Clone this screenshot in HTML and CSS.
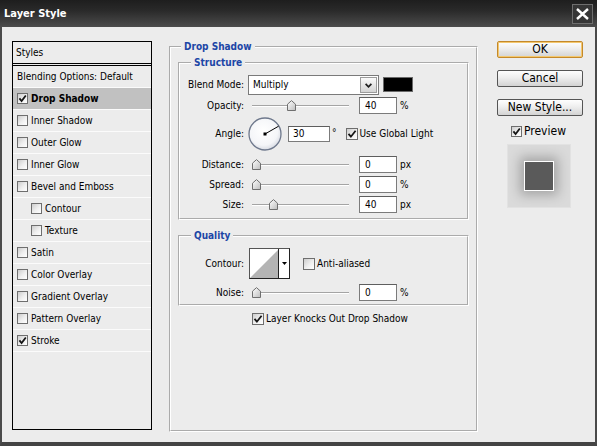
FILE: index.html
```html
<!DOCTYPE html>
<html>
<head>
<meta charset="utf-8">
<title>Layer Style</title>
<link rel="stylesheet" href="styles.css">
</head>
<body>
<div class="window">
  <div class="titlebar">
    <span class="title">Layer Style</span>
    <div class="close">
      <svg width="13" height="12" viewBox="0 0 13 12"><path d="M1 1L12 11M12 1L1 11"/></svg>
    </div>
  </div>
  <div class="body">
    <div class="list">
      <div class="list-head">Styles</div>
      <div class="item">Blending Options: Default</div>
      <div class="item sel"><span class="cb"><svg viewBox="0 0 9 9"><path d="M1.4 4.4L3.6 7L7.8 1.5"/></svg></span><b>Drop Shadow</b></div>
      <div class="item"><span class="cb"></span>Inner Shadow</div>
      <div class="item"><span class="cb"></span>Outer Glow</div>
      <div class="item"><span class="cb"></span>Inner Glow</div>
      <div class="item"><span class="cb"></span>Bevel and Emboss</div>
      <div class="item sub-item"><span class="cb"></span>Contour</div>
      <div class="item sub-item"><span class="cb"></span>Texture</div>
      <div class="item"><span class="cb"></span>Satin</div>
      <div class="item"><span class="cb"></span>Color Overlay</div>
      <div class="item"><span class="cb"></span>Gradient Overlay</div>
      <div class="item"><span class="cb"></span>Pattern Overlay</div>
      <div class="item"><span class="cb"><svg viewBox="0 0 9 9"><path d="M1.4 4.4L3.6 7L7.8 1.5"/></svg></span>Stroke</div>
    </div>

    <div class="main">
      <fieldset class="grp outer">
        <legend>Drop Shadow</legend>
        <fieldset class="grp sub structure">
          <legend>Structure</legend>
          <div class="row r-blend">
            <span class="lbl">Blend Mode:</span>
            <div class="select">
              <span class="sel-text">Multiply</span>
              <span class="sel-btn"><svg width="7" height="5" viewBox="0 0 7 5"><path d="M0.6 0.8L3.5 3.8L6.4 0.8"/></svg></span>
            </div>
            <span class="swatch"></span>
          </div>
          <div class="row r-slider first">
            <span class="lbl">Opacity:</span>
            <div class="slider"><span class="thumb" style="left:35px"><svg width="9" height="11" viewBox="0 0 9 11"><defs><linearGradient id="tg" x1="0" y1="0" x2="1" y2="1"><stop offset="0" stop-color="#ffffff"/><stop offset="1" stop-color="#bdbdbd"/></linearGradient></defs><path class="tp" d="M0.5 4.2L4.5 0.6L8.5 4.2V10.5H0.5Z"/></svg></span></div>
            <span class="num">40</span><span class="unit">%</span>
          </div>
          <div class="row r-angle">
            <span class="lbl">Angle:</span>
            <svg class="dial" width="34" height="34" viewBox="0 0 34 34">
              <defs><radialGradient id="dg" cx="0.45" cy="0.4" r="0.6"><stop offset="0" stop-color="#ffffff"/><stop offset="0.75" stop-color="#f4f5f8"/><stop offset="1" stop-color="#d9dce4"/></radialGradient></defs>
              <circle cx="17" cy="17" r="16" fill="url(#dg)" stroke="#6e788c" stroke-width="1.3"/>
              <line x1="17" y1="17" x2="30.6" y2="9.2" stroke="#000" stroke-width="1"/>
              <rect x="15.5" y="15.5" width="3" height="3" fill="#000"/>
            </svg>
            <span class="num ang">30</span><span class="deg">°</span>
            <span class="chk glob"><span class="cb lg"><svg viewBox="0 0 10 10"><path d="M1.5 4.9L3.9 7.7L8.6 1.8"/></svg></span>Use Global Light</span>
          </div>
          <div class="row r-slider dist">
            <span class="lbl">Distance:</span>
            <div class="slider"><span class="thumb" style="left:0px"><svg width="9" height="11" viewBox="0 0 9 11"><path class="tp" d="M0.5 4.2L4.5 0.6L8.5 4.2V10.5H0.5Z"/></svg></span></div>
            <span class="num">0</span><span class="unit">px</span>
          </div>
          <div class="row r-slider">
            <span class="lbl">Spread:</span>
            <div class="slider"><span class="thumb" style="left:0px"><svg width="9" height="11" viewBox="0 0 9 11"><path class="tp" d="M0.5 4.2L4.5 0.6L8.5 4.2V10.5H0.5Z"/></svg></span></div>
            <span class="num">0</span><span class="unit">%</span>
          </div>
          <div class="row r-slider">
            <span class="lbl">Size:</span>
            <div class="slider"><span class="thumb" style="left:17px"><svg width="9" height="11" viewBox="0 0 9 11"><path class="tp" d="M0.5 4.2L4.5 0.6L8.5 4.2V10.5H0.5Z"/></svg></span></div>
            <span class="num">40</span><span class="unit">px</span>
          </div>
        </fieldset>

        <fieldset class="grp sub quality">
          <legend>Quality</legend>
          <div class="row r-contour">
            <span class="lbl">Contour:</span>
            <div class="contour">
              <span class="c-curve"><svg width="28" height="28" viewBox="0 0 28 28"><polygon points="0,28 28,0 28,28" fill="#b4b4b4"/></svg></span>
              <span class="c-btn"><svg width="5" height="3" viewBox="0 0 5 3"><polygon points="0,0 5,0 2.5,3" fill="#000"/></svg></span>
            </div>
            <span class="chk aa"><span class="cb lg"></span>Anti-aliased</span>
          </div>
          <div class="row r-slider noise">
            <span class="lbl">Noise:</span>
            <div class="slider"><span class="thumb" style="left:0px"><svg width="9" height="11" viewBox="0 0 9 11"><path class="tp" d="M0.5 4.2L4.5 0.6L8.5 4.2V10.5H0.5Z"/></svg></span></div>
            <span class="num">0</span><span class="unit">%</span>
          </div>
        </fieldset>

        <span class="chk knock"><span class="cb lg"><svg viewBox="0 0 10 10"><path d="M1.5 4.9L3.9 7.7L8.6 1.8"/></svg></span>Layer Knocks Out Drop Shadow</span>
      </fieldset>
    </div>

    <div class="side">
      <div class="btn ok">OK</div>
      <div class="btn">Cancel</div>
      <div class="btn">New Style...</div>
      <span class="chk preview"><span class="cb"><svg viewBox="0 0 9 9"><path d="M1.4 4.4L3.6 7L7.8 1.5"/></svg></span>Preview</span>
      <div class="pbox"><div class="sq"></div></div>
    </div>
  </div>
</div>
</body>
</html>
```

FILE: styles.css
```css
* { box-sizing: border-box; }
html, body { margin: 0; padding: 0; }
body {
  width: 597px;
  height: 446px;
  overflow: hidden;
  background: #ececec;
  font-family: "DejaVu Sans Condensed", "DejaVu Sans", sans-serif;
  font-stretch: condensed;
  font-size: 10px;
  line-height: 12px;
  color: #000;
}
.window {
  width: 597px;
  height: 446px;
  display: flex;
  flex-direction: column;
}
.titlebar {
  height: 27px;
  flex: none;
  display: flex;
  align-items: center;
  justify-content: space-between;
  padding: 0 4px;
  background: linear-gradient(#1e1e1e, #2a2a2a 40%, #4c4c4c);
}
.title {
  color: #fff;
  font-weight: bold;
  font-size: 11px;
}
.close {
  width: 21px;
  height: 20px;
  border: 1px solid #6e6e6e;
  background: #363636;
  display: flex;
  align-items: center;
  justify-content: center;
}
.close path { stroke: #fff; stroke-width: 2.4; fill: none; }

.body {
  flex: 1;
  display: flex;
  align-items: flex-start;
  padding: 14px 0 0 10px;
  border-left: 2px solid #4a4a4a;
  border-right: 2px solid #4a4a4a;
  border-bottom: 4px solid #444;
  background: #ececec;
}

/* left style list */
.list {
  width: 140px;
  height: 389px;
  flex: none;
  border: 1px solid #000;
}
.list-head {
  height: 24px;
  border-bottom: 3px double #000;
  display: flex;
  align-items: center;
  padding-left: 3px;
}
.item {
  height: 22px;
  border-bottom: 1px solid #fbfbfb;
  display: flex;
  align-items: center;
  gap: 3px;
  padding-left: 4px;
}
.item.sub-item { padding-left: 18px; }
.item.sel { background: #c1c1c1; }

.cb {
  width: 11px;
  height: 11px;
  flex: none;
  border: 1px solid #6e6e6e;
  background: linear-gradient(135deg, #cdcdcd 0%, #efefef 55%, #ffffff 100%);
  display: flex;
}
.cb svg { width: 9px; height: 9px; }
.cb path { fill: none; stroke: #151515; stroke-width: 1.8; }
.cb.lg { width: 12px; height: 12px; }
.cb.lg svg { width: 10px; height: 10px; }

/* main panel */
.main {
  width: 309px;
  margin-left: 17px;
  flex: none;
}
fieldset.grp {
  margin: 0;
  min-width: 0;
  border: 2px groove #fff;
}
fieldset.grp > legend {
  font-weight: bold;
  color: #1c46a6;
  line-height: 12px;
  padding: 0 3px;
}
fieldset.outer {
  height: 391px;
  padding: 4px 7px 0;
}
fieldset.outer > legend { margin-left: 3px; }
fieldset.sub { padding: 6px 0 5px; }
fieldset.sub > legend { margin-left: 11px; }
fieldset.quality { margin-top: 10px; padding: 6px 0 3px; }

.row { display: flex; align-items: center; }
.lbl { width: 64px; flex: none; text-align: right; }

.r-blend { height: 20px; }
.select {
  width: 131px;
  height: 20px;
  margin-left: 4px;
  flex: none;
  border: 1px solid #7a7a7a;
  background: #fff;
  display: flex;
  align-items: center;
  justify-content: space-between;
  padding: 1px 1px 1px 4px;
}
.sel-btn {
  width: 17px;
  height: 16px;
  border: 1px solid #9c9c9c;
  background: linear-gradient(#fbfbfb, #e6e6e6 50%, #d4d4d4);
  display: flex;
  align-items: center;
  justify-content: center;
}
.sel-btn path { fill: none; stroke: #1e1e1e; stroke-width: 1.7; }
.swatch {
  width: 30px;
  height: 15px;
  margin-left: 4px;
  align-self: flex-start;
  margin-top: 2px;
  background: #000;
  border: 1px solid #6a6a6a;
}

.r-slider { height: 17px; margin-top: 3px; }
.r-slider.first { margin-top: 2px; }
.r-slider.dist { margin-top: 5px; }
.slider {
  width: 97px;
  height: 11px;
  margin-left: 8px;
  flex: none;
  position: relative;
}
.slider::before {
  content: "";
  position: absolute;
  left: 0;
  right: 0;
  top: 5px;
  height: 1px;
  background: #a4a4a4;
  box-shadow: 0 1px 0 #fff;
}
.thumb {
  position: absolute;
  top: 0;
  width: 9px;
  height: 11px;
  display: block;
}
.thumb svg { display: block; }
.tp { fill: url(#tg); stroke: #6f6f6f; stroke-width: 1; }

.num {
  width: 38px;
  height: 17px;
  margin-left: 10px;
  flex: none;
  border: 1px solid #7b7b7b;
  border-top-color: #5e5e5e;
  background: #fff;
  padding-left: 5px;
  line-height: 15px;
}
.unit { margin-left: 3px; }

.r-angle { height: 34px; margin-top: 3px; }
.dial { margin-left: 4px; flex: none; display: block; }
.num.ang { width: 42px; height: 16px; margin-left: 6px; line-height: 14px; padding-left: 4px; }
.deg { margin-left: 2px; margin-bottom: 3px; }

.chk { display: flex; align-items: center; gap: 2px; }
.glob { margin-left: 9px; }

.r-contour { height: 31px; }
.contour {
  width: 41px;
  height: 31px;
  margin-left: 5px;
  flex: none;
  border: 1px solid #222;
  border-top-color: #555;
  border-left-color: #555;
  background: #fff;
  display: flex;
}
.c-curve { width: 29px; border-right: 1px solid #222; display: flex; align-items: flex-end; }
.c-curve svg { display: block; }
.c-btn { flex: 1; display: flex; align-items: center; justify-content: center; }
.aa { margin-left: 13px; }
.r-slider.noise { margin-top: 5px; }

.knock { margin: 6px 0 0 74px; height: 13px; }

/* right column */
.side {
  width: 86px;
  margin-left: 19px;
  flex: none;
  display: flex;
  flex-direction: column;
}
.btn {
  height: 17px;
  border: 1px solid #555;
  border-radius: 2px;
  background: linear-gradient(#fefefe, #eeeeee 45%, #d3d3d3);
  font-size: 12px;
  line-height: 15px;
  text-align: center;
}
.btn + .btn { margin-top: 12px; }
.btn.ok { border-color: #c4892b; box-shadow: inset 0 0 0 1px #f4c86e; }
.preview { margin: 8px 0 0 14px; font-size: 12px; line-height: 14px; }
.pbox {
  width: 64px;
  height: 64px;
  margin: 6px 0 0 10px;
  border: 1px solid #e2e2e2;
  background: #dadada;
  display: flex;
  align-items: center;
  justify-content: center;
}
.pbox .sq {
  width: 30px;
  height: 30px;
  background: #5a5a5a;
  border: 1px solid #fff;
  box-shadow: 0 0 12px 4px rgba(0, 0, 0, 0.25);
}
```
